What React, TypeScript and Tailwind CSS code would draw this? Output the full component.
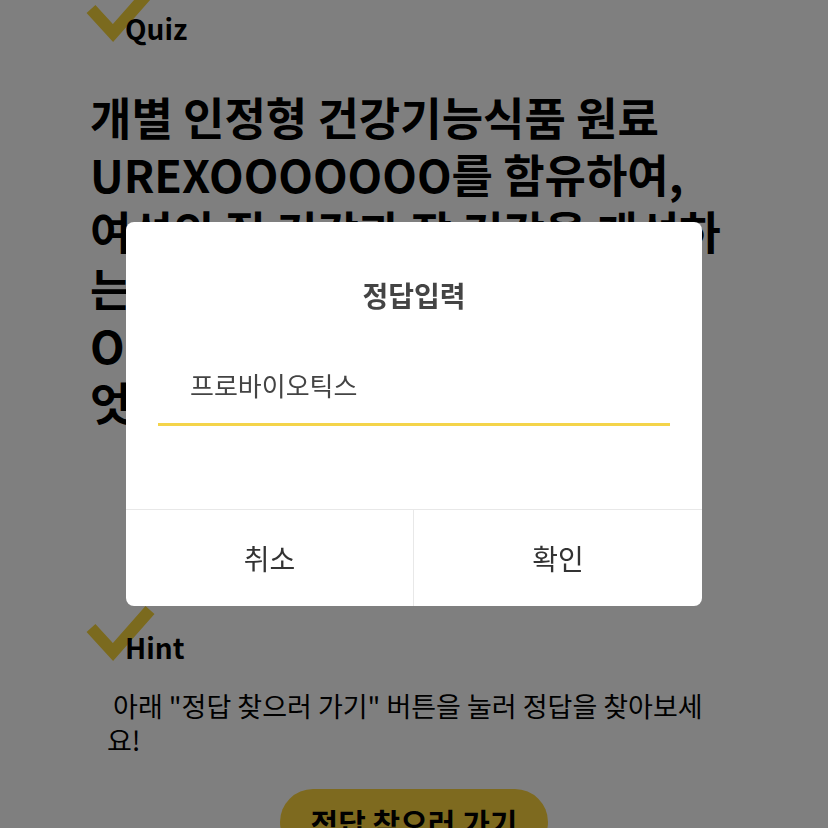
import React, { useState } from "react";

const font = { fontFamily: '"Noto Sans CJK KR", "Noto Sans", sans-serif' };

/* ================= CHECK MARK ================= */
function Check() {
  return (
    <svg
      className="absolute left-[-5px] top-0"
      width="75"
      height="62"
      viewBox="0 0 75 62"
      fill="none"
    >
      <polyline
        points="6,24 28,48 65,6"
        stroke="#f7d43c"
        strokeWidth="12"
        strokeLinecap="butt"
        strokeLinejoin="miter"
      />
    </svg>
  );
}

function SectionLabel({ label }: { label: string }) {
  return (
    <div className="relative h-[60px]">
      <Check />
      <span className="absolute left-[35px] top-[25px] text-[28px] leading-[36px] font-bold text-black">
        {label}
      </span>
    </div>
  );
}

export default function App() {
  const [answer, setAnswer] = useState("프로바이오틱스");

  return (
    <div className="relative h-[828px] overflow-hidden bg-white" style={font}>
      {/* ================= PAGE ================= */}
      <div className="mt-[-15px] px-[90px]">
        <SectionLabel label="Quiz" />

        <h1 className="mt-[43px] mr-[10px] text-[45px] leading-[57px] font-bold text-black">
          개별 인정형 건강기능식품 원료 UREXOOOOOOO를 함유하여, 여성의 질 건강과 장 건강을 개선하는 프로바이오틱스 원료 OOOOOOOOOOO의 이름은 무엇일까요?
        </h1>

        <div className="mt-[174px]">
          <SectionLabel label="Hint" />
        </div>

        <p className="mt-[25px] pl-[17px] pr-[10px] text-[27px] leading-[34px] text-black">
          {"\u00a0"}아래 "정답 찾으러 가기" 버튼을 눌러 정답을 찾아보세요!
        </p>

        <div className="mt-[32px] flex justify-center">
          <button className="h-[66px] w-[268px] rounded-full bg-[#fdd43f] text-[30px] font-bold text-black">
            정답 찾으러 가기
          </button>
        </div>
      </div>

      {/* ================= MODAL ================= */}
      <div className="fixed inset-0 flex items-center justify-center bg-black/50">
        <div className="flex h-[384px] w-[576px] flex-col overflow-hidden rounded-[8px] bg-white">
          <div className="pt-[55px] text-center text-[28px] leading-[36px] font-bold text-[#444]">
            정답입력
          </div>

          <div className="mx-[32px] mt-[52px] border-b-[3px] border-[#f4d44a]">
            <input
              value={answer}
              onChange={(e) => setAnswer(e.target.value)}
              className="h-[58px] w-full bg-transparent pl-[32px] pb-[20px] text-[26px] text-[#444] outline-none"
              style={font}
            />
          </div>

          <div className="mt-auto grid h-[97px] grid-cols-2 border-t border-[#e8e8e8]">
            <button className="border-r border-[#e8e8e8] text-[28px] text-[#333]">취소</button>
            <button className="text-[28px] text-[#333]">확인</button>
          </div>
        </div>
      </div>
    </div>
  );
}
